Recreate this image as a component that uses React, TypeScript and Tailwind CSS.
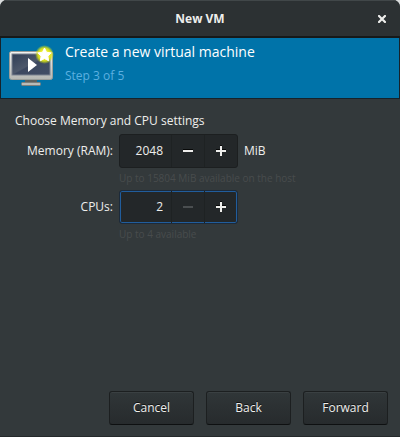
import { useState } from "react";

type SpinProps = {
  id: string;
  value: number;
  min: number;
  max: number;
  step: number;
  focused?: boolean;
  onChange: (value: number) => void;
};

function Spin({ id, value, min, max, step, focused, onChange }: SpinProps) {
  const atMin = value <= min;
  return (
    <div
      className={
        focused
          ? "flex h-[34px] w-[119px] rounded-[3px] border border-[#1c2a3a] bg-[#232729] shadow-[inset_0_0_0_1px_#215d9c]"
          : "flex h-[34px] w-[119px] rounded-[3px] border border-[#1c1f20] bg-[#232729]"
      }
    >
      <input
        id={id}
        type="text"
        inputMode="numeric"
        value={value}
        onChange={(e) => onChange(Number(e.target.value) || min)}
        className="w-0 min-w-0 flex-1 bg-transparent pr-2 text-right text-[#eeeeec] outline-none"
      />
      <button
        type="button"
        aria-label="Decrease"
        disabled={atMin}
        onClick={() => onChange(Math.max(min, value - step))}
        className="flex w-[33px] items-center justify-center border-l border-[#1e2223] text-[#eeeeec] disabled:text-[#4a4e50]"
      >
        <svg width="12" height="12" viewBox="0 0 12 12" aria-hidden="true" shapeRendering="crispEdges">
          {!atMin && <path d="M1 4h10v1H1z" fill="#080909" />}
          <path d="M1 5h10v2H1z" fill="currentColor" />
        </svg>
      </button>
      <button
        type="button"
        aria-label="Increase"
        disabled={value >= max}
        onClick={() => onChange(Math.min(max, value + step))}
        className="flex w-[33px] items-center justify-center border-l border-[#1e2223] text-[#eeeeec]"
      >
        <svg width="12" height="12" viewBox="0 0 12 12" aria-hidden="true" shapeRendering="crispEdges">
          <path d="M1 4h10v1H1zM5 0h2v1H5z" fill="#080909" />
          <path d="M1 5h10v2H1zM5 1h2v10H5z" fill="currentColor" />
        </svg>
      </button>
    </div>
  );
}

function VmIcon() {
  return (
    <svg width="48" height="48" viewBox="0 0 48 48" className="shrink-0" aria-hidden="true">
      <defs>
        <linearGradient id="frame" x1="0" y1="0" x2="0" y2="1">
          <stop offset="0" stopColor="#f4f4f2" />
          <stop offset="1" stopColor="#b4b6b2" />
        </linearGradient>
        <linearGradient id="screen" x1="0" y1="0" x2="1" y2="1">
          <stop offset="0" stopColor="#2f3d55" />
          <stop offset="0.48" stopColor="#4d586b" />
          <stop offset="0.52" stopColor="#3c4860" />
          <stop offset="1" stopColor="#424e65" />
        </linearGradient>
        <radialGradient id="glow">
          <stop offset="0.4" stopColor="#f4f23a" />
          <stop offset="0.7" stopColor="#dde414" stopOpacity="0.9" />
          <stop offset="1" stopColor="#c0d820" stopOpacity="0" />
        </radialGradient>
      </defs>
      <path d="M18 35h12v4H18z" fill="#5d615f" />
      <rect x="14.5" y="38.5" width="19" height="3" rx="1" fill="#b9bbb8" stroke="#7b7e7b" />
      <rect x="2.5" y="7.5" width="43" height="28" rx="2" fill="url(#frame)" stroke="#9a9d99" />
      <rect x="5" y="10" width="38" height="21" fill="url(#screen)" stroke="#7b8290" strokeWidth="1" />
      <path d="M21 14v14l9-7z" fill="#fff" />
      <circle cx="37.5" cy="10.5" r="9.5" fill="url(#glow)" />
      <path
        d="M37.5 4l2 4.300 4.700.6-3.400 3.200.9 4.700-4.200-2.300-4.200 2.300.9-4.700-3.400-3.200 4.700-.6z"
        fill="#fff"
        stroke="#fff"
        strokeWidth="1"
        strokeLinejoin="round"
      />
    </svg>
  );
}

const actionClass =
  "h-[34px] w-[85px] rounded-[3px] border border-[#1c1f20] border-b-[#0e1011] bg-linear-to-b from-[#303638] to-[#272b2d] shadow-[inset_0_1px_0_#3a4042] [text-shadow:0_-1px_0_#0d0f10]";

const hintClass = "col-start-2 mt-[2px] mb-[4px] text-[10px] text-[#484c4d]";

export default function App() {
  const [memory, setMemory] = useState(2048);
  const [cpus, setCpus] = useState(2);

  return (
    <div className="bg-[#d9dcdd]">
      <div className="flex min-h-screen flex-col overflow-hidden rounded-t-[7px] border-b border-[#25292b] bg-[#33393b] font-['Open_Sans','Noto_Sans',sans-serif] text-[12px] leading-[16px] text-[#eeeeec]">
        <header className="grid h-[38px] grid-cols-[1fr_auto_1fr] items-center border-t border-b-2 border-t-[#414749] border-b-[#16191a] bg-[#2c3133] px-3">
          <h1 className="col-start-2 font-bold">New VM</h1>
          <button type="button" aria-label="Close" className="justify-self-end p-[2px]">
            <svg width="8" height="8" viewBox="0 0 8 8" aria-hidden="true">
              <path d="M1 1l6 6M7 1l-6 6" stroke="#eeeeec" strokeWidth="2.200" strokeLinecap="square" />
            </svg>
          </button>
        </header>

        <section className="flex h-[61px] gap-[10px] border-x border-b border-[#16232b] bg-[#0073a9] px-[6px] pt-1">
          <div className="pt-[2px]">
            <VmIcon />
          </div>
          <div>
            <h2 className="text-[14px] leading-[20px] text-white">Create a new virtual machine</h2>
            <p className="mt-1 leading-[20px] text-[#5cb0e0]">Step 3 of 5</p>
          </div>
        </section>

        <main className="flex-1 px-[15px] pt-[14px]">
          <p>Choose Memory and CPU settings</p>
          <div className="mt-[5px] grid grid-cols-[98px_1fr] gap-x-[6px]">
            <label htmlFor="memory" className="self-center text-right">
              Memory (RAM):
            </label>
            <div className="flex items-center gap-[6px]">
              <Spin id="memory" value={memory} min={64} max={15804} step={1} onChange={setMemory} />
              <span>MiB</span>
            </div>
            <p className={hintClass}>Up to 15804 MiB available on the host</p>
            <label htmlFor="cpus" className="self-center text-right">
              CPUs:
            </label>
            <Spin id="cpus" value={cpus} min={2} max={4} step={1} focused onChange={setCpus} />
            <p className={hintClass}>Up to 4 available</p>
          </div>
        </main>

        <footer className="flex justify-end gap-3 px-3 pb-[11px]">
          <button type="button" className={actionClass}>Cancel</button>
          <button type="button" className={actionClass}>Back</button>
          <button type="button" className={actionClass}>Forward</button>
        </footer>
      </div>
    </div>
  );
}
